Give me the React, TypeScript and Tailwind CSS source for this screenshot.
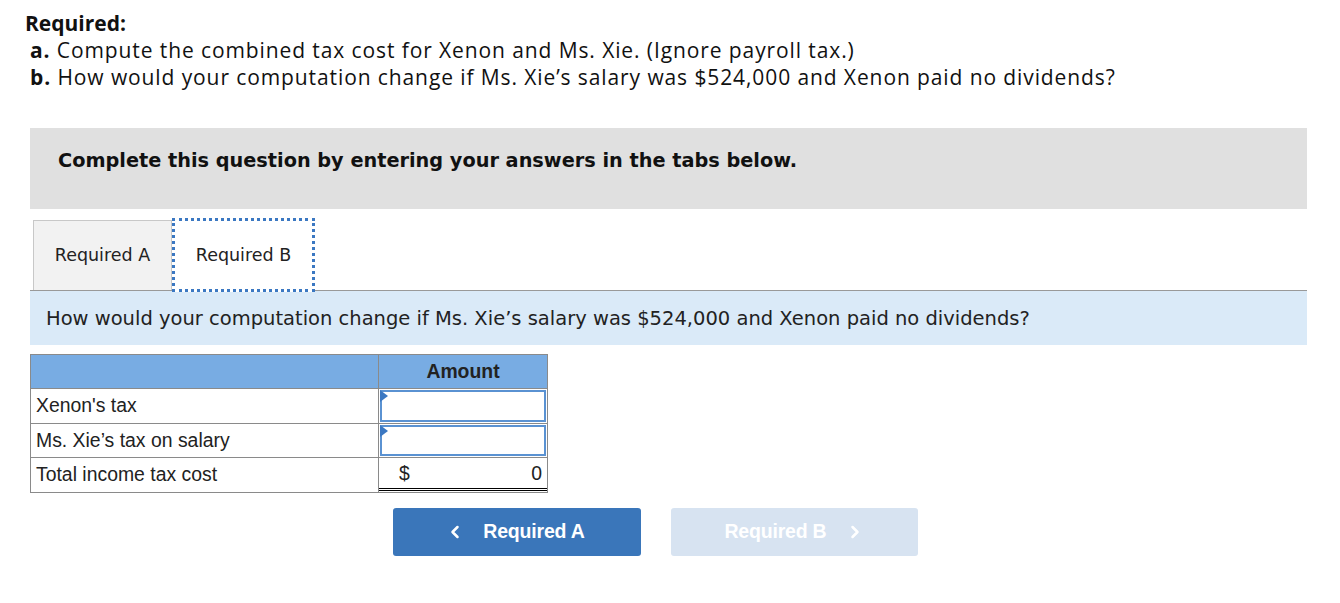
import React from "react";
import { ChevronLeft, ChevronRight } from "lucide-react";

const headFont = { fontFamily: '"Open Sans", "Liberation Sans", sans-serif' };
const verdana = { fontFamily: '"DejaVu Sans", Verdana, sans-serif' };
const arial = { fontFamily: '"Liberation Sans", Arial, sans-serif' };

const InputCell = () => (
  <div className="relative h-full w-full p-[1px]">
    <div className="h-full w-full border-2 border-[#5a92d2] bg-white" />
    <span className="absolute left-[1px] top-[1px] h-0 w-0 border-y-[6px] border-l-[8px] border-y-transparent border-l-[#3b78c2]" />
  </div>
);

const App = () => {
  return (
    <div className="min-h-[603px] w-[1340px] bg-white pl-[30px] pr-[33px] pt-[10px] text-[#222]">
      {/* question header */}
      <div className="-ml-[5px] text-[21px] leading-[27px] tracking-[0.9px] text-[#111]" style={headFont}>
        <div className="font-bold tracking-normal">Required:</div>
        <div className="pl-[5px]">
          <span className="font-bold">a.</span> Compute the combined tax cost for Xenon and Ms. Xie. (Ignore payroll tax.)
        </div>
        <div className="pl-[5px]">
          <span className="font-bold">b.</span> How would your computation change if Ms. Xie’s salary was $524,000 and Xenon paid no dividends?
        </div>
      </div>

      {/* instructions */}
      <div className="mt-[37px] h-[81px] bg-[#e0e0e0] pl-[28px] pt-[20px]">
        <p className="text-[19.3px] font-bold leading-[26px] text-[#111]" style={verdana}>
          Complete this question by entering your answers in the tabs below.
        </p>
      </div>

      {/* tabs */}
      <div className="mt-[9px] flex h-[74px] items-center pl-[3px]" style={verdana}>
        <div className="flex h-[70px] w-[139px] items-center justify-center border border-b-0 border-[#c8c8c8] bg-[#f2f2f2] text-[17.5px] text-[#222]">
          Required A
        </div>
        <div className="relative z-10 flex h-[74px] w-[143px] items-center justify-center border-[3px] border-dotted border-[#3b78c2] bg-white text-[17.5px] text-[#222]">
          Required B
        </div>
      </div>
      <div className="-mt-[2px] border-t border-[#999]" />
      <div className="flex h-[54px] items-center bg-[#daeaf8] pl-[16px] pt-[2px] text-[19.5px] text-[#222]" style={verdana}>
        How would your computation change if Ms. Xie’s salary was $524,000 and Xenon paid no dividends?
      </div>

      {/* table */}
      <table className="mt-[9px] w-[518px] border-collapse text-[19.4px] text-[#222]" style={arial}>
        <tbody>
          <tr className="h-[34px] bg-[#78ace3]">
            <td className="w-[348px] border border-[#8a8a8a]" />
            <td className="border border-[#8a8a8a] text-center font-bold">Amount</td>
          </tr>
          <tr className="h-[35px]">
            <td className="border border-[#8a8a8a] pl-[5px]">Xenon's tax</td>
            <td className="h-[35px] border border-[#8a8a8a] p-0">
              <InputCell />
            </td>
          </tr>
          <tr className="h-[34px]">
            <td className="border border-[#8a8a8a] pl-[5px]">Ms. Xie’s tax on salary</td>
            <td className="h-[34px] border border-[#8a8a8a] p-0">
              <InputCell />
            </td>
          </tr>
          <tr className="h-[35px]">
            <td className="border border-[#8a8a8a] pl-[5px]">Total income tax cost</td>
            <td className="border border-[#8a8a8a] border-t-black p-0">
              <div className="flex h-[31px] items-center justify-between border-b-[3px] border-double border-black pl-[20px] pr-[5px]">
                <span>$</span>
                <span>0</span>
              </div>
            </td>
          </tr>
        </tbody>
      </table>

      {/* navigation */}
      <div className="mt-[15px] flex gap-[30px] pl-[363px]" style={arial}>
        <button className="flex h-[48px] w-[248px] items-center justify-center gap-[18px] rounded-[3px] bg-[#3a76ba] pr-[4px] text-[19.5px] font-bold text-white">
          <ChevronLeft className="h-[20px] w-[20px]" strokeWidth={3} />
          <span className="tracking-[-0.2px]">Required A</span>
        </button>
        <button className="flex h-[48px] w-[247px] items-center justify-center gap-[18px] rounded-[3px] bg-[#d7e3f1] text-[19.5px] font-bold text-white">
          <span className="tracking-[-0.2px]">Required B</span>
          <ChevronRight className="h-[20px] w-[20px]" strokeWidth={3} />
        </button>
      </div>
    </div>
  );
};

export default App;
